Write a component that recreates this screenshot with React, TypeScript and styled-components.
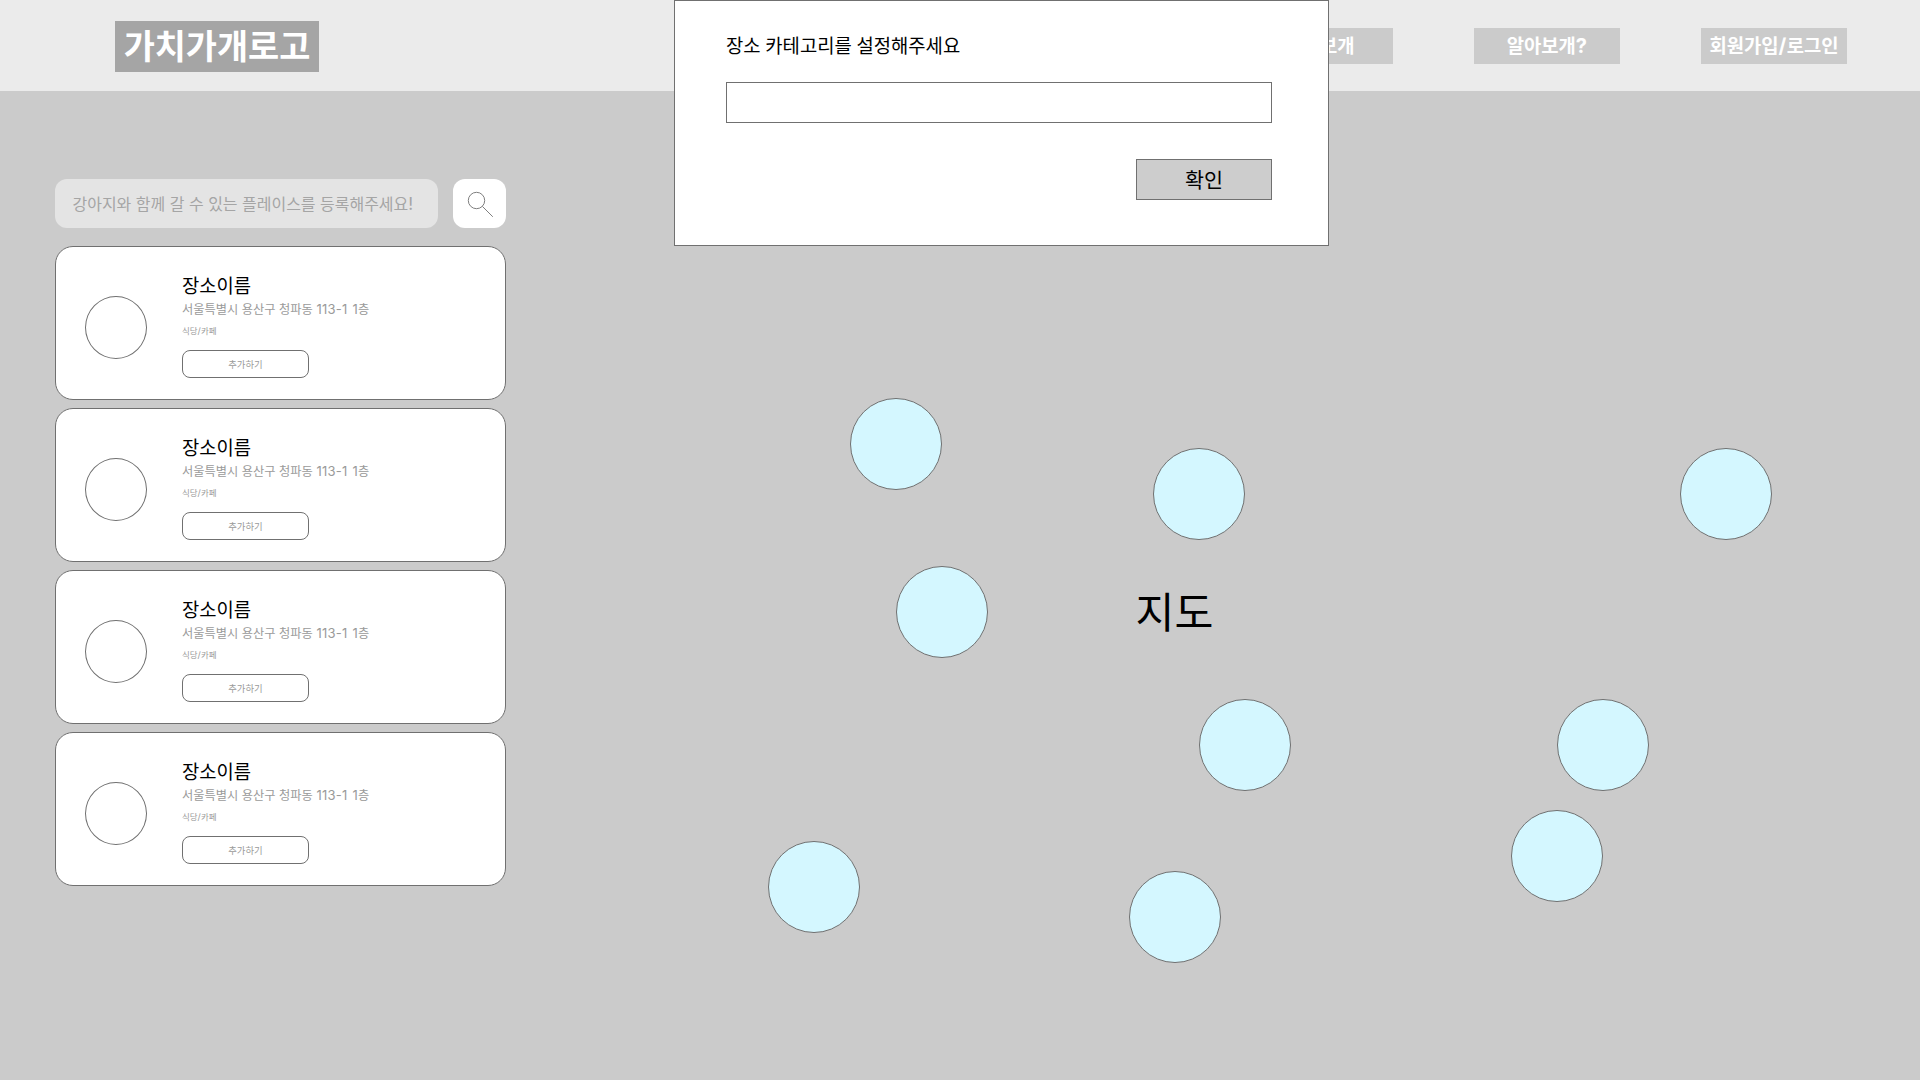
import React from "react";
import styled, { createGlobalStyle } from "styled-components";

const GlobalStyle = createGlobalStyle`
  *, *::before, *::after { box-sizing: border-box; }
  body {
    margin: 0;
    background: #cbcbcb;
    font-family: Inter, "Noto Sans CJK KR", sans-serif;
    overflow: hidden;
  }
  button, input { font-family: inherit; margin: 0; }
`;

/* Hangul is set slightly smaller than the nominal size; Latin keeps it. */
const Text = styled.span<{
  $size: number;
  $weight?: number;
  $color?: string;
  $lift?: number;
  $space?: number;
}>`
  display: block;
  padding-bottom: ${(p) => (p.$lift ?? 0) * 2}px;
  font-family: "Noto Sans CJK KR", sans-serif;
  font-size: ${(p) => p.$size * 0.94}px;
  font-weight: ${(p) => p.$weight ?? 400};
  line-height: ${(p) => Math.round(p.$size * 1.2)}px;
  word-spacing: ${(p) => p.$space ?? 0}em;
  color: ${(p) => p.$color ?? "#000000"};
  white-space: nowrap;
`;

const Latin = styled.span`
  font-family: Inter, sans-serif;
  font-size: 1.064em;
  line-height: 1;
  letter-spacing: 0.02em;
`;

const Page = styled.div`
  position: relative;
  display: flex;
  flex-direction: column;
  width: 1920px;
  height: 1080px;
  background: #cbcbcb;
`;

const Header = styled.header`
  display: flex;
  align-items: flex-start;
  justify-content: space-between;
  height: 91px;
  padding: 21px 73px 0 115px;
  background: #ebebeb;
`;

const Logo = styled.div`
  display: flex;
  align-items: center;
  justify-content: center;
  width: 204px;
  height: 51px;
  background: #a5a5a5;
`;

const Nav = styled.nav`
  display: flex;
  gap: 81px;
  padding-top: 7px;
`;

const NavItem = styled.a`
  display: flex;
  align-items: center;
  justify-content: center;
  width: 146px;
  height: 36px;
  background: #cbcbcb;
`;

const Main = styled.main`
  display: flex;
  flex: 1;
`;

const Sidebar = styled.aside`
  display: flex;
  flex-direction: column;
  gap: 18px;
  width: 506px;
  padding: 88px 0 0 55px;
`;

const SearchRow = styled.div`
  display: flex;
  gap: 15px;
  height: 49px;
`;

const SearchField = styled.div`
  display: flex;
  align-items: center;
  width: 383px;
  padding-left: 17.5px;
  border-radius: 12px;
  background: #e4e4e4;
`;

const SearchButton = styled.button`
  display: flex;
  width: 53px;
  padding: 12px 0 0 14px;
  border: 0;
  border-radius: 12px;
  background: #ffffff;
`;

const CardList = styled.div`
  display: flex;
  flex-direction: column;
  gap: 8px;
`;

const Card = styled.article`
  display: flex;
  align-items: flex-start;
  gap: 35px;
  height: 154px;
  padding: 26px 29px 0;
  border: 1px solid #707070;
  border-radius: 18px;
  background: #ffffff;
`;

const Thumb = styled.div`
  flex: none;
  width: 62px;
  height: 63px;
  margin-top: 23px;
  border: 1px solid #707070;
  border-radius: 50%;
`;

const CardBody = styled.div`
  display: flex;
  flex-direction: column;
  align-items: flex-start;
`;

const Address = styled.div`
  margin-top: 4px;
`;

const Category = styled.div`
  margin-top: 8px;
`;

const AddButton = styled.button`
  display: flex;
  align-items: center;
  justify-content: center;
  width: 127px;
  height: 28px;
  margin-top: 14px;
  padding: 0;
  border: 1px solid #707070;
  border-radius: 8px;
  background: #ffffff;
`;

const MapArea = styled.section`
  position: relative;
  flex: 1;
`;

const Pin = styled.div<{ $x: number; $y: number }>`
  position: absolute;
  left: ${(p) => p.$x}px;
  top: ${(p) => p.$y}px;
  width: 92px;
  height: 92px;
  border: 1px solid #707070;
  border-radius: 50%;
  background: #d4f7ff;
`;

const MapLabel = styled.div`
  position: absolute;
  left: 629.5px;
  top: 492px;
`;

const Modal = styled.div`
  position: absolute;
  left: 674px;
  top: 0;
  display: flex;
  flex-direction: column;
  width: 655px;
  height: 246px;
  padding: 32px 56px 0 51px;
  border: 1px solid #707070;
  background: #ffffff;
`;

const CategoryInput = styled.input`
  width: 546px;
  height: 41px;
  margin-top: 25px;
  border: 1px solid #707070;
  background: #ffffff;
`;

const ConfirmButton = styled.button`
  display: flex;
  align-items: center;
  justify-content: center;
  align-self: flex-end;
  width: 136px;
  height: 41px;
  margin-top: 36px;
  padding: 0;
  border: 1px solid #707070;
  background: #cdcdcd;
`;

const places = [1, 2, 3, 4];

const pins = [
  { x: 850, y: 398 },
  { x: 1153, y: 448 },
  { x: 1680, y: 448 },
  { x: 896, y: 566 },
  { x: 1199, y: 699 },
  { x: 1557, y: 699 },
  { x: 1511, y: 810 },
  { x: 768, y: 841 },
  { x: 1129, y: 871 },
];

const MAP_LEFT = 506;
const MAP_TOP = 91;

function SearchIcon() {
  return (
    <svg width="28" height="28" viewBox="0 0 28 28" fill="none" stroke="#707070" strokeWidth="0.9">
      <circle cx="9.5" cy="9.5" r="8.2" />
      <path d="M15.4 15.4 L25.8 25.8" />
    </svg>
  );
}

function PlaceCard() {
  return (
    <Card>
      <Thumb />
      <CardBody>
        <Text $size={20}>장소이름</Text>
        <Address>
          <Text $size={13} $color="#9a9a9a" $space={0.07}>
            서울특별시 용산구 청파동 <Latin>113-1 1</Latin>층
          </Text>
        </Address>
        <Category>
          <Text $size={9} $color="#9a9a9a">
            식당<Latin>/</Latin>카페
          </Text>
        </Category>
        <AddButton>
          <Text $size={10} $color="#9a9a9a">추가하기</Text>
        </AddButton>
      </CardBody>
    </Card>
  );
}

export default function App() {
  return (
    <>
      <GlobalStyle />
      <Page>
        <Header>
          <Logo>
            <Text $size={36} $weight={700} $color="#ffffff" $lift={2}>가치가개로고</Text>
          </Logo>
          <Nav>
            <NavItem>
              <Text $size={20} $weight={700} $color="#ffffff" $lift={1}>찾아보개</Text>
            </NavItem>
            <NavItem>
              <Text $size={20} $weight={700} $color="#ffffff" $lift={1}>
                알아보개<Latin>?</Latin>
              </Text>
            </NavItem>
            <NavItem>
              <Text $size={20} $weight={700} $color="#ffffff" $lift={1}>
                회원가입<Latin>/</Latin>로그인
              </Text>
            </NavItem>
          </Nav>
        </Header>
        <Main>
          <Sidebar>
            <SearchRow>
              <SearchField>
                <Text $size={17} $color="#a5a5a5" $lift={1} $space={0.06}>
                  강아지와 함께 갈 수 있는 플레이스를 등록해주세요<Latin>!</Latin>
                </Text>
              </SearchField>
              <SearchButton aria-label="검색">
                <SearchIcon />
              </SearchButton>
            </SearchRow>
            <CardList>
              {places.map((id) => (
                <PlaceCard key={id} />
              ))}
            </CardList>
          </Sidebar>
          <MapArea>
            {pins.map((pin) => (
              <Pin key={`${pin.x}-${pin.y}`} $x={pin.x - MAP_LEFT} $y={pin.y - MAP_TOP} />
            ))}
            <MapLabel>
              <Text $size={45}>지도</Text>
            </MapLabel>
          </MapArea>
        </Main>
        <Modal role="dialog">
          <Text $size={20} $space={0.03}>장소 카테고리를 설정해주세요</Text>
          <CategoryInput />
          <ConfirmButton>
            <Text $size={22} $lift={1}>확인</Text>
          </ConfirmButton>
        </Modal>
      </Page>
    </>
  );
}
